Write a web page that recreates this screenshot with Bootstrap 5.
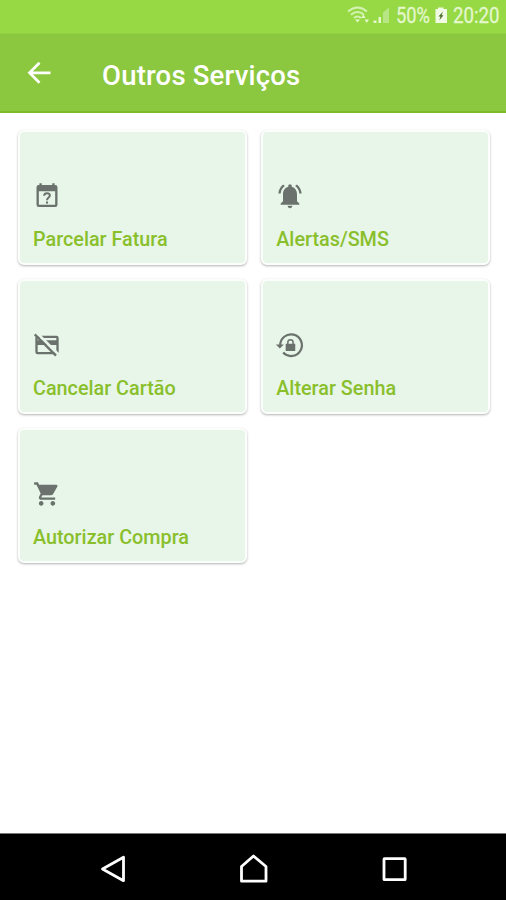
<!DOCTYPE html>
<html lang="pt-BR">
<head>
<meta charset="utf-8">
<meta name="viewport" content="width=device-width, initial-scale=1">
<title>Outros Serviços</title>
<link href="https://cdn.jsdelivr.net/npm/bootstrap@5.3.0/dist/css/bootstrap.min.css" rel="stylesheet">
<style>
body{font-family:Roboto,"Liberation Sans",sans-serif;background:#fff}
.screen{height:900px;width:506px;overflow:hidden}
.statusbar{height:34px;background:#96d945;border-bottom:1px solid #90d043}
.statusbar svg text{font-size:21.5px;fill:#e4f7cd;stroke:#e4f7cd;stroke-width:.3px}
.appbar{height:79px;background:#8bc73f;border-bottom:2px solid #7dbb26;padding:0 24px}
.appbar h1{font-size:27.5px;font-weight:500;line-height:32px;margin:6px 0 0 47px;letter-spacing:.2px;color:#fff}
.services{padding:17px 16px 0 17.5px;display:grid;grid-template-columns:1fr 1fr;column-gap:14px;row-gap:14.4px}
.tile{height:134.6px;border:2px solid #fcfefc;border-radius:6px;background:#e7f6e8;box-shadow:0 1px 2.5px rgba(0,0,0,.3);padding:0 13px 10.5px 13.5px;text-decoration:none}
.tile svg{width:28px;height:28px;fill:#6b716c;margin:0 0 18.5px -.5px}
.tile span{font-size:19.8px;line-height:24px;font-weight:500;color:#8abf2c}
.navkeys{height:67px;background:#000;border-top:1px solid #777}
</style>
</head>
<body>
<div class="screen d-flex flex-column">
  <div class="statusbar flex-shrink-0">
    <svg class="d-block" width="506" height="33" viewBox="0 0 506 33">
      <g fill="none" stroke="#d5f2b5" stroke-width="2">
        <path d="M348 11.500Q357.500 3.500 367 11.500M351 14.800Q357.500 9.300 364 14.800M354 18Q357.500 15 361 18"/>
      </g>
      <path fill="#e4f7cd" d="M355 19.500h5l-2.500 3zM361 18l2.300-3.500 2.200 3.500zM364.500 19.500h4.500l-2.200 3.500zM373.500 20.500h3V23h-3zM378.500 17h2.500v6h-2.500z"/>
      <path fill="#b9e685" d="M383 12.500l6-5V23h-6z"/>
      <text x="396" y="23" textLength="34" lengthAdjust="spacingAndGlyphs">50%</text>
      <path fill="#f1fae4" d="M438 7.500h5.500V9h3.500v14h-11.500V9h2.500z"/>
      <path fill="#4b6b2a" d="M443 11.500l-4.500 5h2l-1.200 3.700 4.200-5h-2z"/>
      <text x="453" y="23" textLength="46.500" lengthAdjust="spacingAndGlyphs">20:20</text>
    </svg>
  </div>
  <header class="appbar d-flex align-items-center flex-shrink-0">
    <svg width="31" height="31" viewBox="0 0 31 31" fill="none" stroke="#fff" stroke-width="2.700"><path d="M26.500 15.800H6M15.500 5.800L5.500 15.800l10 10"/></svg>
    <h1>Outros Serviços</h1>
  </header>
  <main class="services">
    <a class="tile d-flex flex-column justify-content-end align-items-start">
      <svg viewBox="0 0 24 24"><path fill-rule="evenodd" d="M5.500 1h2v1.500h9V1h2v1.500h.5a2 2 0 0 1 2 2V19.500a2 2 0 0 1-2 2H5a2 2 0 0 1-2-2V4.500a2 2 0 0 1 2-2h.5zM5 8v11.500h14V8z"/><path fill="none" stroke="#6b716c" stroke-width="1.700" d="M9.500 11.800Q9.700 9.700 12 9.700t2.500 1.900c0 1.600-2.500 1.900-2.500 4"/><path d="M11.100 16.700h1.800v1.800h-1.800z"/></svg>
      <span>Parcelar Fatura</span>
    </a>
    <a class="tile d-flex flex-column justify-content-end align-items-start">
      <svg viewBox="0 0.600 24 24"><path d="M7.580 4.080L6.150 2.650C3.750 4.480 2.170 7.300 2.030 10.500h2c.15-2.650 1.510-4.970 3.550-6.420zm12.390 6.420h2c-.15-3.200-1.730-6.020-4.120-7.850l-1.420 1.430c2.020 1.450 3.390 3.770 3.540 6.420zM18 11c0-3.070-1.640-5.640-4.500-6.320V4c0-.83-.67-1.500-1.500-1.500s-1.500.67-1.500 1.500v.68C7.630 5.360 6 7.920 6 11v6l-2 2v1h16v-1l-2-2zm-6 12c1.100 0 2-.9 2-2h-4c0 1.100.9 2 2 2z"/></svg>
      <span>Alertas/SMS</span>
    </a>
    <a class="tile d-flex flex-column justify-content-end align-items-start">
      <svg viewBox="0 0 24 24"><path fill-rule="evenodd" d="M4 4h16a2 2 0 0 1 2 2v12a2 2 0 0 1-2 2H4a2 2 0 0 1-2-2V6a2 2 0 0 1 2-2zm0 2v2h16V6zm0 6v6h16v-6z"/><path stroke="#e7f6e8" stroke-width="2.400" d="M2.500 .8L22 20.300"/><path stroke="#6b716c" stroke-width="1.900" d="M1.500 2.900L19.700 21.100"/></svg>
      <span>Cancelar Cartão</span>
    </a>
    <a class="tile d-flex flex-column justify-content-end align-items-start">
      <svg viewBox="0 0 24 24" overflow="visible"><path fill="none" stroke="#6b716c" stroke-width="1.900" d="M3.600 12.500a9.300 9.300 0 1 1 2.500 6"/><path d="M-.1 11.500h6.800L3.300 15zM9.500 11v-1.300a2.900 2.900 0 0 1 5.800 0V11h1.200v6.200H8.300v-6.200zm1.300 0h3.200V9.700a1.600 1.600 0 0 0-3.200 0z"/></svg>
      <span>Alterar Senha</span>
    </a>
    <a class="tile d-flex flex-column justify-content-end align-items-start">
      <svg viewBox="0 0 24 24"><path d="M7 18c-1.100 0-1.990.9-1.990 2S5.900 22 7 22s2-.9 2-2-.9-2-2-2zM1 2v2h2l3.600 7.590-1.350 2.450c-.16.280-.25.610-.25.960 0 1.100.9 2 2 2h12v-2H7.420c-.14 0-.25-.11-.25-.25l.03-.12.900-1.630h7.450c.75 0 1.410-.41 1.750-1.030l3.580-6.490A1.003 1.003 0 0 0 20 4H5.210l-.94-2H1zm16 16c-1.100 0-1.990.9-1.990 2s.89 2 1.990 2 2-.9 2-2-.9-2-2-2z"/></svg>
      <span>Autorizar Compra</span>
    </a>
  </main>
  <nav class="navkeys mt-auto flex-shrink-0">
    <svg class="d-block" width="506" height="66" viewBox="0 834 506 66" fill="none" stroke="#fff" stroke-width="2.800" stroke-linejoin="round">
      <path d="M102.500 869L123.500 857.300V880.700z"/>
      <path d="M241.500 881.200V866.500L253.500 856l12.500 10.500v14.700z"/>
      <rect x="384" y="858.700" width="21.200" height="21" rx=".5"/>
    </svg>
  </nav>
</div>
<script src="https://cdn.jsdelivr.net/npm/bootstrap@5.3.0/dist/js/bootstrap.bundle.min.js"></script>
</body>
</html>
